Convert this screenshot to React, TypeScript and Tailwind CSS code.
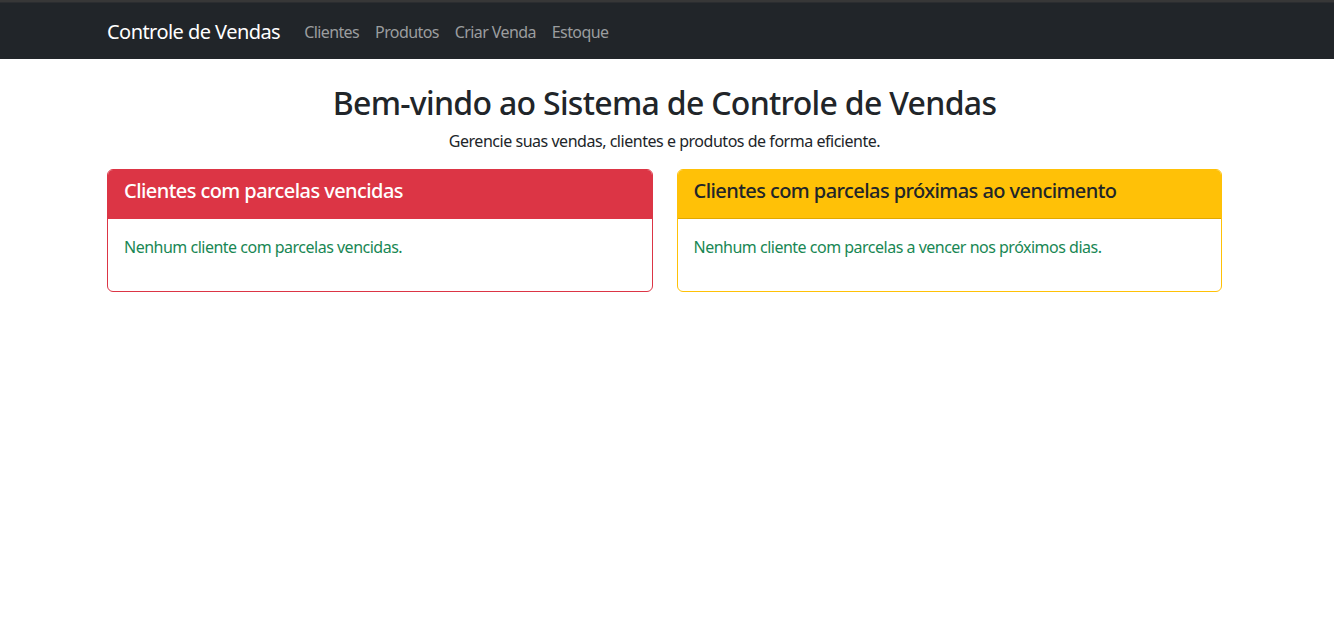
export default function App() {
  const font = { fontFamily: '"Segoe UI", "Noto Sans", "Liberation Sans", sans-serif' }

  return (
    <div className="min-h-screen bg-white text-[#212529] tracking-[-0.5px]" style={font}>
      {/* Top strip + navbar */}
      <div className="h-[2px] bg-[#373737]"></div>
      <div className="h-[1px] bg-[#2b2d30]"></div>
      <nav className="h-[56px] bg-[#212529] flex items-center pt-[2px]">
        <div className="ml-[107px] flex items-center">
          <a className="text-[20px] leading-[30px] text-white mr-[16px] tracking-[-0.55px]">Controle de Vendas</a>
          <ul className="flex items-center tracking-[-0.6px]">
            <li><a className="block px-[8px] text-[16px] leading-[24px] text-[#9b9d9f]">Clientes</a></li>
            <li><a className="block px-[8px] text-[16px] leading-[24px] text-[#9b9d9f]">Produtos</a></li>
            <li><a className="block px-[8px] text-[16px] leading-[24px] text-[#9b9d9f]">Criar Venda</a></li>
            <li><a className="block px-[8px] text-[16px] leading-[24px] text-[#9b9d9f]">Estoque</a></li>
          </ul>
        </div>
      </nav>

      <main className="ml-[107px] w-[1115px] pt-[25px]">
        <h2 className="text-center text-[32px] leading-[38px] font-medium mb-[7px] tracking-[-0.7px]">
          Bem-vindo ao Sistema de Controle de Vendas
        </h2>
        <p className="text-center text-[16px] leading-[24px] mb-[16px] tracking-[-0.47px]">
          Gerencie suas vendas, clientes e produtos de forma eficiente.
        </p>

        <div className="grid grid-cols-2 gap-[24px]">
          <div className="border border-[#dc3545] rounded-[6px] overflow-hidden">
            <div className="bg-[#dc3545] text-white px-[16px] pt-[9px] pb-[7px] border-b border-[#dc3545]">
              <h5 className="text-[20px] leading-[24px] font-medium mb-[8px] tracking-[-0.57px]">Clientes com parcelas vencidas</h5>
            </div>
            <div className="p-[16px]">
              <p className="text-[16px] leading-[24px] text-[#198754] mb-[16px]">Nenhum cliente com parcelas vencidas.</p>
            </div>
          </div>

          <div className="border border-[#ffc107] rounded-[6px] overflow-hidden">
            <div className="bg-[#ffc107] text-[#212529] px-[16px] pt-[9px] pb-[7px] border-b border-[#e0a800]">
              <h5 className="text-[20px] leading-[24px] font-medium mb-[8px] tracking-[-0.57px]">Clientes com parcelas próximas ao vencimento</h5>
            </div>
            <div className="p-[16px]">
              <p className="text-[16px] leading-[24px] text-[#198754] mb-[16px]">Nenhum cliente com parcelas a vencer nos próximos dias.</p>
            </div>
          </div>
        </div>
      </main>
    </div>
  )
}
